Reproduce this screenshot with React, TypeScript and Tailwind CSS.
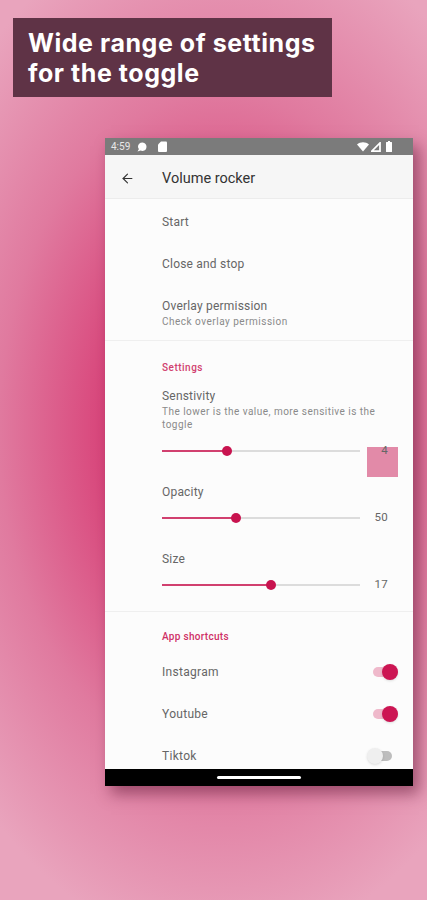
import React from 'react';
import { ArrowLeft } from 'lucide-react';

function StatusBar() {
  return (
    <div className="flex h-[17px] items-center justify-between bg-[#7b7b7b] pl-[6px] pr-[21px] text-white">
      <div className="flex items-center gap-[3px]">
        <span className="text-[10px] leading-none text-[#e8e8e8]">4:59</span>
        <svg width="12" height="12" viewBox="0 0 24 24" fill="#fff" className="ml-[3px]">
          <path d="M13 3C7.5 3 4 6.6 4 11c0 2 .7 3.700 1.900 5L3 21l6-1.800c1.200.5 2.600.8 4 .8 5.500 0 8-4.500 8-8.500S18.500 3 13 3z" />
        </svg>
        <svg width="9" height="11" viewBox="0 0 18 22" fill="#fff" className="ml-[7px]">
          <path d="M6 1h10a2 2 0 0 1 2 2v17a2 2 0 0 1-2 2H2a2 2 0 0 1-2-2V7z" />
        </svg>
      </div>
      <div className="flex items-center gap-[2px]">
        <svg width="12" height="10" viewBox="0 0 24 20" fill="#fff">
          <path d="M12 19L0 5c6.500-6 17.500-6 24 0z" />
        </svg>
        <svg width="10" height="10" viewBox="0 0 20 20" fill="none" stroke="#fff" strokeWidth="3.500">
          <path d="M18 2v16H2z" />
        </svg>
        <svg width="6" height="11" viewBox="0 0 12 22" fill="#fff" className="ml-[3px]">
          <path d="M4 0h4v2h3a1 1 0 0 1 1 1v18a1 1 0 0 1-1 1H1a1 1 0 0 1-1-1V3a1 1 0 0 1 1-1h3z" />
        </svg>
      </div>
    </div>
  );
}

function Slider({ fill, value }: { fill: number; value: string }) {
  return (
    <div className="flex h-[14px] items-center">
      <div className="relative h-[2px] w-[198px] bg-[#dcdcdc]">
        <div className="h-full bg-[#d1406f]" style={{ width: fill }} />
        <div
          className="absolute top-[-4px] ml-[-5px] h-[10px] w-[10px] rounded-full bg-[#c8134f]"
          style={{ left: fill }}
        />
      </div>
      <span className="relative z-10 ml-[8px] w-[20px] text-right text-[11.500px] leading-none tracking-[0.3px] text-[#666]">
        {value}
      </span>
    </div>
  );
}

function Toggle({ on, label }: { on: boolean; label: string }) {
  return (
    <div className="flex h-[42px] items-center justify-between">
      <span className="text-[12px] tracking-[0.3px] text-[#666]">{label}</span>
      {on ? (
        <div className="relative h-[10px] w-[25px] rounded-full bg-[#efb9cb]">
          <div className="absolute right-0 top-[-3px] h-[16px] w-[16px] rounded-full bg-[#cc1553] shadow" />
        </div>
      ) : (
        <div className="relative mr-[6px] h-[10px] w-[24px] rounded-full bg-[#bdbdbd]">
          <div className="absolute left-[-1px] top-[-3px] h-[16px] w-[16px] rounded-full bg-[#efefef] shadow" />
        </div>
      )}
    </div>
  );
}

export default function App() {
  return (
    <div
      className="h-[900px] w-[427px] overflow-hidden bg-[radial-gradient(ellipse_340px_520px_at_220px_430px,#d2306e_0%,#d9477c_35%,#e07a9f_65%,#e9a4bd_100%)] pl-[13px] pt-[18px]"
      style={{ fontFamily: 'Roboto, sans-serif' }}
    >
      <div
        className="flex h-[79px] w-[319px] flex-col justify-center bg-[#5f3346] pl-[15px] text-[25px] font-bold leading-[30px] tracking-[0.55px] text-white"
        style={{ fontFamily: 'Inter, sans-serif' }}
      >
        <div>Wide range of settings</div>
        <div>for the toggle</div>
      </div>

      <div className="ml-[92px] mt-[41px] flex h-[648px] w-[308px] flex-col overflow-hidden bg-[#fcfcfc] shadow-[6px_8px_14px_rgba(90,20,50,0.5)]">
        <StatusBar />
        <div className="flex h-[44px] items-center border-b border-[#ececec] bg-[#f6f6f6] pl-[15px] pt-[4px]">
          <ArrowLeft size={15} strokeWidth={1.800} className="text-[#333]" />
          <span className="ml-[27px] text-[14.500px] text-[#333]">Volume rocker</span>
        </div>

        <div className="relative flex-1 overflow-hidden pl-[57px] pr-[15px] pt-[2px]">
          <div className="flex h-[42px] items-center text-[12px] tracking-[0.2px] text-[#666]">Start</div>
          <div className="flex h-[42px] items-center text-[12px] tracking-[0.2px] text-[#666]">Close and stop</div>
          <div className="pt-[14px] text-[12px] leading-[15px] tracking-[0.2px] text-[#666]">Overlay permission</div>
          <div className="text-[10px] leading-[15px] tracking-[0.5px] text-[#8a8a8a]">Check overlay permission</div>
          <div className="ml-[-57px] mr-[-15px] mt-[11px] h-px bg-[#efefef]" />

          <div className="pt-[21px] text-[10px] font-medium leading-[12px] tracking-[0.5px] text-[#d1406f]">Settings</div>
          <div className="pt-[15px] text-[12px] leading-[15px] tracking-[0.2px] text-[#666]">Senstivity</div>
          <div className="mt-[1px] text-[10px] leading-[13px] tracking-[0.47px] text-[#8a8a8a]">
            The lower is the value, more sensitive is the toggle
          </div>
          <div className="relative mt-[13px]">
            <Slider fill={65} value="4" />
            <div className="absolute left-[205px] top-[3px] h-[30px] w-[31px] bg-[#e28aa8]" />
          </div>
          <div className="pt-[27px] text-[12px] leading-[15px] tracking-[0.2px] text-[#666]">Opacity</div>
          <div className="mt-[11px]">
            <Slider fill={74} value="50" />
          </div>
          <div className="pt-[27px] text-[12px] leading-[15px] tracking-[0.2px] text-[#666]">Size</div>
          <div className="mt-[11px]">
            <Slider fill={109} value="17" />
          </div>
          <div className="ml-[-57px] mr-[-15px] mt-[19px] h-px bg-[#efefef]" />

          <div className="pt-[19px] text-[10px] font-medium leading-[12px] tracking-[0.3px] text-[#cf2f65]">App shortcuts</div>
          <div className="mt-[8px]">
            <Toggle on label="Instagram" />
            <Toggle on label="Youtube" />
            <Toggle on={false} label="Tiktok" />
          </div>
        </div>

        <div className="flex h-[17px] shrink-0 items-center justify-center bg-black">
          <div className="h-[3px] w-[84px] rounded-full bg-white" />
        </div>
      </div>
    </div>
  );
}
